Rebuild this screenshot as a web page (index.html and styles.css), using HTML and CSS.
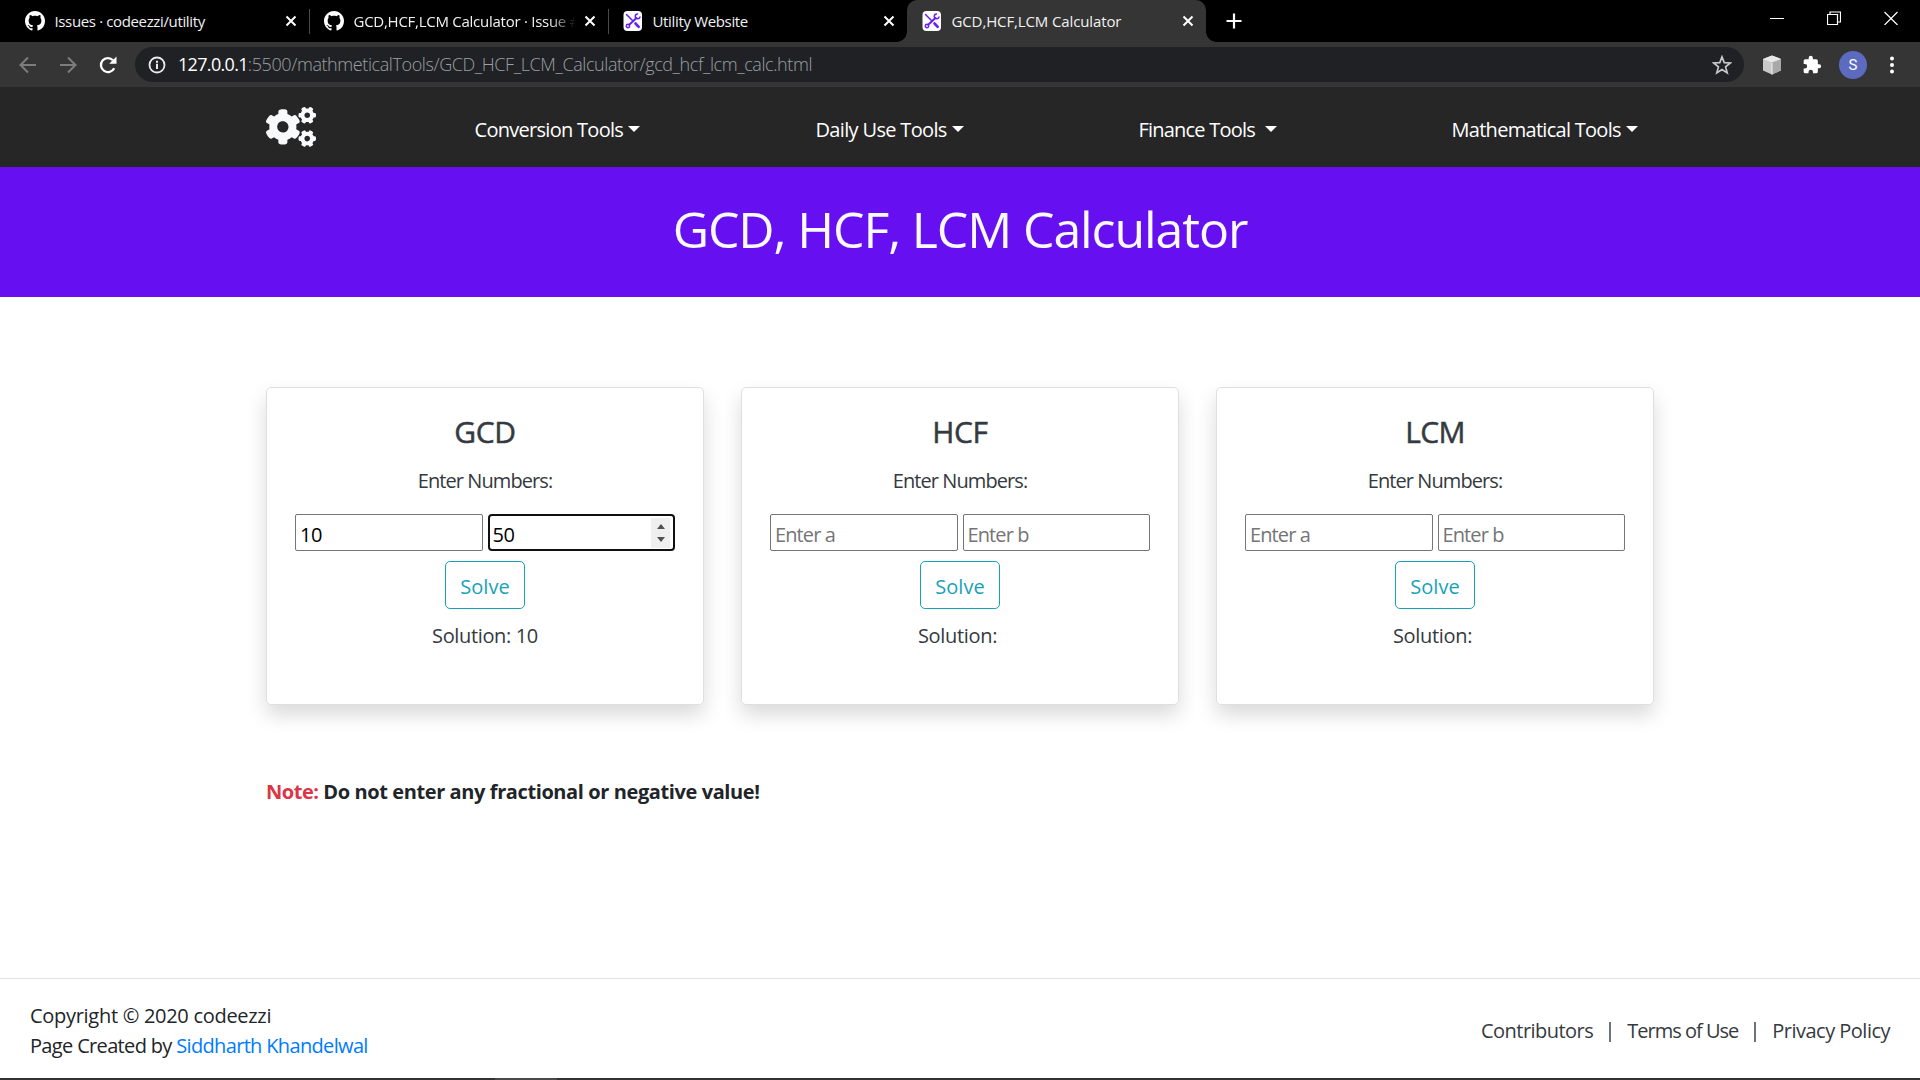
FILE: index.html
```html
<!DOCTYPE html>
<html lang="en">
<head>
<meta charset="utf-8">
<title>GCD,HCF,LCM Calculator</title>
<link rel="stylesheet" href="styles.css">
</head>
<body>
<svg width="0" height="0" class="defs">
  <symbol id="github" viewBox="0 0 16 16"><path d="M8 0C3.58 0 0 3.58 0 8c0 3.54 2.29 6.53 5.47 7.59.4.07.55-.17.55-.38 0-.19-.01-.82-.01-1.49-2.01.37-2.53-.49-2.69-.94-.09-.23-.48-.94-.82-1.13-.28-.15-.68-.52-.01-.53.63-.01 1.08.58 1.23.82.72 1.21 1.87.87 2.33.66.07-.52.28-.87.51-1.07-1.78-.2-3.64-.89-3.64-3.95 0-.87.31-1.59.82-2.15-.08-.2-.36-1.02.08-2.12 0 0 .67-.21 2.2.82.64-.18 1.32-.27 2-.27s1.36.09 2 .27c1.53-1.04 2.2-.82 2.2-.82.44 1.1.16 1.92.08 2.12.51.56.82 1.27.82 2.15 0 3.07-1.87 3.75-3.65 3.95.29.25.54.73.54 1.48 0 1.07-.01 1.93-.01 2.2 0 .21.15.46.55.38A8.01 8.01 0 0 0 16 8c0-4.42-3.58-8-8-8z" fill="#fff"/></symbol>
  <symbol id="tools" viewBox="0 0 20 20">
    <rect x=".5" width="18.500" height="20" rx="4" fill="#fff"/>
    <g fill="none" stroke="#6a1ff0" stroke-linecap="round">
      <path d="M6.200 13.800 13.500 7" stroke-width="2"/>
      <circle cx="5" cy="15" r="1.700" stroke-width="1.500"/>
      <path d="M14.500 3A2.400 2.400 0 1 0 17 6" stroke-width="1.500"/>
      <path d="M3.500 3.500 10 10" stroke-width="1.500"/>
      <path d="m12.500 12.500 3.200 3.400" stroke-width="2.600"/>
    </g>
  </symbol>
  <symbol id="close" viewBox="0 0 12 12"><path d="M1.500 1.500l9 9M10.500 1.500l-9 9" stroke="#fff" stroke-width="2" fill="none"/></symbol>
</svg>

<header class="tabstrip">
  <div class="tab">
    <svg class="favicon"><use href="#github"/></svg><span class="tab-title t-issues">Issues · codeezzi/utility</span><svg class="tab-close"><use href="#close"/></svg>
  </div>
  <div class="tab divided">
    <svg class="favicon"><use href="#github"/></svg><span class="tab-title t-issue faded">GCD,HCF,LCM Calculator · Issue #</span><svg class="tab-close"><use href="#close"/></svg>
  </div>
  <div class="tab divided">
    <svg class="favicon"><use href="#tools"/></svg><span class="tab-title t-utility">Utility Website</span><svg class="tab-close"><use href="#close"/></svg>
  </div>
  <div class="tab active">
    <svg class="favicon"><use href="#tools"/></svg><span class="tab-title t-calc">GCD,HCF,LCM Calculator</span><svg class="tab-close"><use href="#close"/></svg>
  </div>
  <svg class="new-tab" viewBox="0 0 16 16"><path d="M8 .5v15M.5 8h15" stroke="#fff" stroke-width="2.200"/></svg>
  <div class="window-controls">
    <svg viewBox="0 0 14 14"><path d="M0 7.500h14" stroke="#fff"/></svg>
    <svg viewBox="0 0 14 14"><path d="M.5 3.500h10v10H.5zM3 3.500v-2.500h10.500v10h-3" stroke="#fff" stroke-width="1.200" fill="none"/></svg>
    <svg viewBox="0 0 14 14"><path d="M.5 1l13 13M13.500 1l-13 13" stroke="#fff" stroke-width="1.200"/></svg>
  </div>
</header>

<div class="toolbar">
  <svg class="tool" viewBox="0 0 18 18"><path d="M17 9H2M9 1.500 1.500 9 9 16.500" stroke="#7d7d7d" stroke-width="2" fill="none"/></svg>
  <svg class="tool" viewBox="0 0 18 18"><path d="M1 9h15M9 1.500 16.500 9 9 16.500" stroke="#7d7d7d" stroke-width="2" fill="none"/></svg>
  <svg class="tool" viewBox="0 0 18 18"><path d="M15.200 12.200A7 7 0 1 1 14 4.200" stroke="#fff" stroke-width="2.300" fill="none"/><path d="M17.500.5v7.300h-7.300z" fill="#fff"/></svg>
  <div class="omnibox">
    <svg class="info" viewBox="0 0 18 18"><circle cx="9" cy="9" r="7.500" stroke="#e8eaed" stroke-width="1.800" fill="none"/><path d="M9 7.800v5.200M9 4.800v2" stroke="#e8eaed" stroke-width="2"/></svg>
    <span class="host">127.0.0.1</span><span class="path">:5500/mathmeticalTools/GCD_HCF_LCM_Calculator/gcd_hcf_lcm_calc.html</span>
    <svg class="star" viewBox="0 0 18 18"><path d="m9 1.700 2 5.200 5.500.3-4.300 3.500 1.500 5.400L9 13l-4.700 3.100 1.500-5.400L1.500 7.200l5.500-.3z" stroke="#c6c8ca" stroke-width="1.500" fill="none"/></svg>
  </div>
  <div class="extensions">
    <svg width="20" height="20" viewBox="0 0 20 20"><path d="m10 .5 9 3.500v11.500L10 19.500l-9-4V4z" fill="#c9c9c9"/><path d="m10 .5 9 3.500-9 3.500L1 4z" fill="#e8e8e8"/><path d="M10 7.500 19 4v11.500l-9 4z" fill="#a9a9a9"/><path d="M10 8v11.500" stroke="#eee"/></svg>
    <svg width="20" height="20" viewBox="0 0 24 24"><path d="M20.500 11H19V7a2 2 0 0 0-2-2h-4V3.500a2.500 2.500 0 0 0-5 0V5H4a2 2 0 0 0-2 2v3.800h1.500a2.700 2.700 0 0 1 0 5.400H2V20a2 2 0 0 0 2 2h3.800v-1.500a2.700 2.700 0 0 1 5.400 0V22H17a2 2 0 0 0 2-2v-4h1.500a2.500 2.500 0 0 0 0-5z" fill="#fff"/></svg>
    <span class="avatar">S</span>
    <svg width="6" height="20" viewBox="0 0 6 20"><g fill="#fff"><circle cx="3" cy="3.500" r="2"/><circle cx="3" cy="10" r="2"/><circle cx="3" cy="16.500" r="2"/></g></svg>
  </div>
</div>

<nav class="navbar">
  <svg class="logo" viewBox="0 0 640 512"><path fill="#f8f9fa" d="M512.1 191l-8.2 14.3c-3 5.3-9.4 7.5-15.1 5.4-11.8-4.4-22.6-10.7-32.1-18.6-4.6-3.8-5.8-10.5-2.8-15.7l8.2-14.3c-6.9-8-12.3-17.3-15.9-27.4h-16.5c-6 0-11.2-4.3-12.2-10.3-2-12-2.1-24.6 0-37.1 1-6 6.2-10.4 12.2-10.4h16.5c3.6-10.1 9-19.4 15.9-27.4l-8.2-14.3c-3-5.2-1.9-11.9 2.8-15.7 9.5-7.9 20.4-14.2 32.1-18.6 5.7-2.1 12.1.1 15.1 5.4l8.2 14.3c10.5-1.9 21.2-1.9 31.7 0L552 6.3c3-5.3 9.400-7.500 15.100-5.400 11.800 4.400 22.600 10.700 32.100 18.600 4.600 3.800 5.800 10.500 2.800 15.700l-8.200 14.300c6.900 8 12.300 17.300 15.900 27.400h16.500c6 0 11.200 4.300 12.200 10.300 2 12 2.100 24.600 0 37.100-1 6-6.200 10.400-12.200 10.400h-16.500c-3.600 10.100-9 19.400-15.900 27.400l8.200 14.300c3 5.200 1.900 11.900-2.800 15.700-9.500 7.900-20.400 14.200-32.100 18.600-5.700 2.100-12.100-.1-15.100-5.400l-8.200-14.300c-10.400 1.900-21.200 1.900-31.700 0zm-10.500-58.800c38.500 29.600 82.400-14.300 52.800-52.800-38.500-29.700-82.400 14.300-52.800 52.800zM386.300 286.100l33.700 16.800c10.100 5.800 14.500 18.100 10.500 29.100-8.900 24.200-26.400 46.400-42.600 65.800-7.400 8.900-20.200 11.100-30.300 5.300l-29.100-16.800c-16 13.700-34.600 24.600-54.900 31.700v33.600c0 11.600-8.300 21.600-19.700 23.600-24.600 4.200-50.400 4.400-75.900 0-11.500-2-20-11.900-20-23.600V418c-20.300-7.200-38.900-18-54.900-31.700L74 403c-10 5.800-22.900 3.600-30.300-5.300-16.200-19.400-33.300-41.600-42.200-65.700-4-10.900.4-23.200 10.500-29.100l33.300-16.800c-3.900-20.900-3.900-42.400 0-63.400L12 205.800c-10.100-5.800-14.600-18.100-10.500-29 8.900-24.200 26-46.400 42.200-65.800 7.400-8.900 20.200-11.100 30.300-5.300l29.100 16.800c16-13.700 34.600-24.600 54.900-31.700V57.100c0-11.500 8.200-21.500 19.600-23.500 24.600-4.200 50.500-4.400 76-.1 11.500 2 20 11.900 20 23.600v33.600c20.300 7.200 38.900 18 54.900 31.700l29.100-16.800c10-5.800 22.900-3.600 30.300 5.300 16.200 19.400 33.200 41.600 42.100 65.800 4 10.900.1 23.200-10 29.100l-33.700 16.800c3.900 21 3.900 42.500 0 63.500zm-117.600 21.100c59.200-77-28.700-164.900-105.700-105.700-59.200 77 28.700 164.900 105.700 105.700zm243.400 182.700l-8.200 14.300c-3 5.300-9.400 7.500-15.100 5.400-11.800-4.400-22.600-10.700-32.100-18.600-4.600-3.800-5.800-10.500-2.800-15.700l8.200-14.300c-6.900-8-12.300-17.300-15.900-27.400h-16.500c-6 0-11.200-4.300-12.200-10.300-2-12-2.100-24.600 0-37.100 1-6 6.200-10.400 12.200-10.400h16.500c3.600-10.100 9-19.400 15.900-27.400l-8.200-14.300c-3-5.200-1.900-11.900 2.800-15.700 9.500-7.900 20.400-14.200 32.100-18.600 5.700-2.100 12.100.1 15.100 5.400l8.200 14.300c10.500-1.900 21.200-1.900 31.700 0l8.200-14.300c3-5.300 9.400-7.500 15.100-5.400 11.800 4.400 22.600 10.700 32.100 18.600 4.600 3.800 5.800 10.500 2.800 15.700l-8.200 14.300c6.900 8 12.300 17.300 15.900 27.400h16.500c6 0 11.200 4.300 12.200 10.300 2 12 2.100 24.600 0 37.100-1 6-6.200 10.400-12.200 10.400h-16.500c-3.600 10.100-9 19.400-15.900 27.400l8.200 14.300c3 5.200 1.900 11.900-2.800 15.700-9.500 7.900-20.400 14.200-32.100 18.600-5.700 2.100-12.100-.1-15.100-5.400l-8.200-14.300c-10.400 1.900-21.200 1.900-31.700 0zM501.600 431c38.500 29.600 82.400-14.300 52.800-52.800-38.500-29.600-82.400 14.300-52.800 52.800z"/></svg>
  <a class="nav-link">Conversion Tools</a>
  <a class="nav-link daily">Daily Use Tools</a>
  <a class="nav-link finance">Finance Tools</a>
  <a class="nav-link">Mathematical Tools</a>
</nav>

<section class="banner"><h1>GCD, HCF, LCM Calculator</h1></section>

<main class="container">
  <div class="cards">
    <article class="card">
      <h2>GCD</h2>
      <p class="prompt">Enter Numbers:</p>
      <div class="fields">
        <div class="field value">10</div>
        <div class="field value focused">50<span class="spinner"></span></div>
      </div>
      <button class="solve">Solve</button>
      <p class="answer full">Solution: 10</p>
    </article>
    <article class="card">
      <h2>HCF</h2>
      <p class="prompt">Enter Numbers:</p>
      <div class="fields">
        <div class="field">Enter a</div>
        <div class="field">Enter b</div>
      </div>
      <button class="solve">Solve</button>
      <p class="answer">Solution:&nbsp;</p>
    </article>
    <article class="card">
      <h2 class="lcm">LCM</h2>
      <p class="prompt">Enter Numbers:</p>
      <div class="fields">
        <div class="field">Enter a</div>
        <div class="field">Enter b</div>
      </div>
      <button class="solve">Solve</button>
      <p class="answer">Solution:&nbsp;</p>
    </article>
  </div>
  <p class="note"><span class="note-label">Note:</span> Do not enter any fractional or negative value!</p>
</main>

<footer class="footer">
  <div class="credits">
    <p class="copyright">Copyright © 2020 codeezzi</p>
    <p class="author">Page Created by <a>Siddharth Khandelwal</a></p>
  </div>
  <div class="links">
    <a class="contributors">Contributors</a><i></i><a class="terms">Terms of Use</a><i></i><a class="privacy">Privacy Policy</a>
  </div>
</footer>
<div class="taskbar"></div>
</body>
</html>
```
FILE: styles.css
```css
* { box-sizing: border-box; margin: 0; padding: 0; }

body {
  display: flex;
  flex-direction: column;
  height: 1080px;
  overflow: hidden;
  background: #fff;
  color: #212529;
  font: 20px/30px "Open Sans", "Noto Sans", sans-serif;
}

svg { display: block; flex: none; }
.defs { position: absolute; }

/* Tab strip */
.tabstrip { display: flex; align-items: center; flex: none; height: 42px; padding-left: 10px; background: #000; }
.tab { display: flex; align-items: center; position: relative; width: 299px; height: 42px; padding: 0 12px 0 15px; flex: none; }
.tab.divided { box-shadow: inset 1px 0 #4a4a4a; clip-path: inset(9px 0 8px 0); }
.tab.active { background: #353535; border-radius: 10px 10px 0 0; }
.tab.active::before,
.tab.active::after { content: ""; position: absolute; bottom: 0; width: 10px; height: 10px; }
.tab.active::before { left: -10px; background: radial-gradient(circle at 0 0, transparent 9.500px, #353535 10px); }
.tab.active::after { right: -10px; background: radial-gradient(circle at 100% 0, transparent 9.500px, #353535 10px); }
.favicon { width: 20px; height: 20px; margin-right: 9.500px; }
.tab-title { flex: none; width: 224px; margin: -1px 6px 0 0; overflow: hidden; color: #f1f1f1; font-size: 15px; white-space: pre; }
.t-issues { letter-spacing: -.36px; }
.t-issue { letter-spacing: -.26px; }
.t-utility { letter-spacing: -.34px; }
.t-calc { letter-spacing: -.12px; }
.faded { mask-image: linear-gradient(90deg, #000 195px, transparent 222px); }
.tab-close { width: 12px; height: 12px; }
.new-tab { width: 16px; height: 16px; margin-left: 20px; }
.window-controls { display: flex; gap: 43px; margin: -6px 22px 0 auto; }
.window-controls svg { width: 14px; height: 14px; }

/* Address bar */
.toolbar { display: flex; align-items: center; flex: none; height: 45px; padding-left: 18.500px; background: #353535; }
.tool { width: 18px; height: 18px; margin-right: 22px; }
.omnibox { display: flex; align-items: center; width: 1609px; height: 35px; margin-left: -3.500px; padding: 0 12px 0 13px; border-radius: 18px; background: #202124; font-size: 18px; }
.info { width: 18px; height: 18px; margin-right: 12px; }
.host,
.path { margin-top: -1px; }
.host { color: #fff; letter-spacing: -.68px; }
.path { color: #9aa0a6; font-weight: 300; letter-spacing: -.41px; }
.star { width: 20px; height: 20px; margin-left: auto; }
.extensions { display: flex; align-items: center; margin-left: 18px; }
.extensions svg + svg { margin-left: 20px; }
.avatar { width: 28px; height: 28px; margin: 0 22px 0 17px; border-radius: 50%; background: #5c6bc0; color: #fff; font: 15px/28px Roboto, sans-serif; text-align: center; }
.extensions .avatar + svg { margin-left: 0; }

/* Site navigation */
.navbar { display: grid; grid-template-columns: 208.500px 341px 323px 313px auto; flex: none; height: 80px; padding: 0 247px 0 266px; background: #262626; }
.logo { width: 50px; height: 40px; margin-top: 20px; }
.nav-link { display: flex; align-items: center; padding-top: 5px; color: #fff; letter-spacing: -.71px; white-space: nowrap; }
.nav-link::after { content: ""; margin-left: 5px; margin-top: -2px; border: 6px solid transparent; border-top-color: #fff; border-bottom: 0; }
.daily { letter-spacing: -.66px; }
.finance { letter-spacing: -.79px; }
.finance::after { margin-left: 10px; }

.banner { flex: none; height: 130px; padding-top: 32px; background: #6610f2; color: #f8f9fa; text-align: center; }
.banner h1 { font-size: 50px; font-weight: 400; line-height: 60px; letter-spacing: -1.100px; }

/* Calculators */
.container { flex: 1; padding: 90px 266px 0; }
.cards { display: grid; grid-template-columns: repeat(3, 438px); gap: 37px; }
.card { height: 318px; padding: 26px 28px 0; border: 1px solid #dfdfdf; border-radius: 5px; color: #343a40; text-align: center; box-shadow: 0 10px 20px rgba(0, 0, 0, .15); }
.card h2 { font-size: 30px; font-weight: 500; line-height: 36px; letter-spacing: -.3px; -webkit-text-stroke: .5px; }
.card .lcm { letter-spacing: -.7px; }
.prompt { margin-top: 16px; letter-spacing: -.92px; }
.fields { display: grid; grid-template-columns: 1fr 1fr; gap: 5px; margin-top: 18px; }
.field { display: flex; align-items: center; position: relative; height: 37px; padding: 4px 0 0 4px; border: 1px solid #767676; border-radius: 2px; color: #757575; letter-spacing: -.88px; }
.value { color: #000; letter-spacing: -.5px; }
.focused { padding: 4px 0 0 3px; border: 2px solid #101010; border-radius: 4px; }
.spinner { position: absolute; top: 2px; right: 3px; display: flex; flex-direction: column; align-items: center; justify-content: center; gap: 8px; width: 19px; height: 30px; background: #efefef; }
.spinner::before,
.spinner::after { content: ""; border: 4.500px solid transparent; }
.spinner::before { border-top: 0; border-bottom: 5px solid #505050; }
.spinner::after { border-bottom: 0; border-top: 5px solid #505050; }
.solve { display: block; width: 80px; height: 48px; margin: 10px auto 12px; padding-top: 4px; border: 1px solid #17a2b8; border-radius: 5px; background: transparent; color: #17a2b8; font: inherit; }
.answer { letter-spacing: -.3px; }
.answer.full { letter-spacing: -.36px; }
.note { margin-top: 72px; font-weight: 700; letter-spacing: -.4px; }
.note-label { color: #dc3545; letter-spacing: -.47px; }

/* Footer */
.footer { display: flex; justify-content: space-between; flex: none; height: 100px; padding: 22px 30px 0; border-top: 1px solid #dee2e6; }
.copyright { letter-spacing: -.29px; }
.author { letter-spacing: -.66px; }
.author a { color: #007bff; }
.links { display: flex; align-items: center; height: 30px; margin-top: 15px; color: #343a40; }
.links i { width: 2px; height: 20px; margin: 1px 16px 0; background: #6c757d; }
.contributors { letter-spacing: -.54px; }
.terms { letter-spacing: -.98px; }
.privacy { letter-spacing: -.52px; }
.taskbar { flex: none; height: 2px; background: linear-gradient(90deg, #333 495px, #4a4a4a 495px, #4a4a4a 557px, #333 557px); }
```
